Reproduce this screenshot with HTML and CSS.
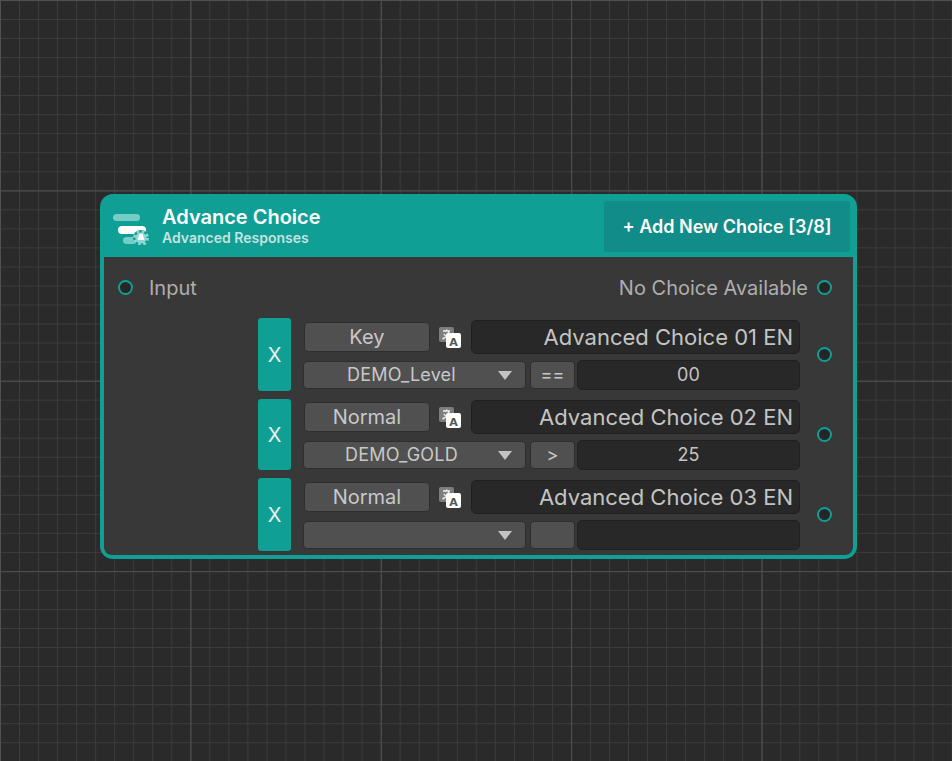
FILE: index.html
```html
<!DOCTYPE html>
<html lang="en">
<head>
    <meta charset="UTF-8">
    <title>Advance Choice</title>
    <link rel="stylesheet" href="styles.css">
</head>
<body>
    <svg class="defs" width="0" height="0">
        <symbol id="translate" viewBox="0 0 22 21">
            <rect x="0" y="0" width="15" height="15" rx="2" fill="#7d7d7d"/>
            <path d="M4 4H11M7.5 2.5V4M10 4.5C9 8 6.5 10.5 3.5 12M5 7C6 9 8 10.5 10 11" fill="none" stroke="#eee" stroke-width="1.4"/>
            <rect x="7" y="6" width="15" height="15" rx="2" fill="#fff"/>
            <text x="14.5" y="18.5" class="translate-a">A</text>
        </symbol>
    </svg>

    <div class="node">
        <div class="node-header">
            <svg class="node-icon" width="36" height="34" viewBox="0 0 36 34">
                <rect x="0" y="3" width="27" height="7" rx="3.5" fill="#74cdc6"/>
                <rect x="5" y="15" width="28" height="8" rx="4" fill="#fff"/>
                <rect x="10" y="26" width="14" height="7" rx="3.5" fill="#74cdc6"/>
                <circle cx="28" cy="27" r="8" fill="#0f9f95"/>
                <circle cx="28" cy="27" r="6.5" fill="none" stroke="#8fd8d2" stroke-width="3" stroke-dasharray="2.6 2.5"/>
                <circle cx="28" cy="27" r="5.5" fill="#8fd8d2"/>
                <path d="M28 22.5C26 22.5 25.6 24 25.6 26L24.6 29H31.4L30.4 26C30.4 24 30 22.5 28 22.5Z" fill="#fff"/>
            </svg>
            <div class="node-titles">
                <div class="node-title">Advance Choice</div>
                <div class="node-subtitle">Advanced Responses</div>
            </div>
            <div class="add-choice">+ Add New Choice [3/8]</div>
        </div>
        <div class="node-body">
            <div class="port-row">
                <span class="port"></span>
                <span class="port-label port-input">Input</span>
                <span class="port-label port-output">No Choice Available</span>
                <span class="port"></span>
            </div>

            <div class="choices">
                <div class="choice">
                    <div class="remove">X</div>
                    <div class="choice-fields">
                        <div class="top-line">
                            <div class="btn type-btn">Key</div>
                            <svg class="translate-icon" width="22" height="21"><use href="#translate"/></svg>
                            <div class="field text-field">Advanced Choice 01 EN</div>
                        </div>
                        <div class="bottom-line">
                            <div class="btn dropdown"><span class="dropdown-text">DEMO_Level</span><span class="arrow"></span></div>
                            <div class="btn op">==</div>
                            <div class="field value">00</div>
                        </div>
                    </div>
                    <span class="port choice-port"></span>
                </div>

                <div class="choice choice-short">
                    <div class="remove">X</div>
                    <div class="choice-fields">
                        <div class="top-line">
                            <div class="btn type-btn">Normal</div>
                            <svg class="translate-icon" width="22" height="21"><use href="#translate"/></svg>
                            <div class="field text-field">Advanced Choice 02 EN</div>
                        </div>
                        <div class="bottom-line">
                            <div class="btn dropdown"><span class="dropdown-text">DEMO_GOLD</span><span class="arrow"></span></div>
                            <div class="btn op">&gt;</div>
                            <div class="field value">25</div>
                        </div>
                    </div>
                    <span class="port choice-port"></span>
                </div>

                <div class="choice">
                    <div class="remove">X</div>
                    <div class="choice-fields">
                        <div class="top-line">
                            <div class="btn type-btn">Normal</div>
                            <svg class="translate-icon" width="22" height="21"><use href="#translate"/></svg>
                            <div class="field text-field">Advanced Choice 03 EN</div>
                        </div>
                        <div class="bottom-line">
                            <div class="btn dropdown"><span class="dropdown-text"></span><span class="arrow"></span></div>
                            <div class="btn op"></div>
                            <div class="field value"></div>
                        </div>
                    </div>
                    <span class="port choice-port"></span>
                </div>
            </div>
        </div>
    </div>
</body>
</html>
```

FILE: styles.css
```css
* {
    box-sizing: border-box;
}
html, body {
    height: 100%;
}
body {
    margin: 0;
    overflow: hidden;
    font-family: Inter, "Noto Sans", sans-serif;
    background-color: #2a2a2a;
    background-image:
        linear-gradient(to right, #505050 1px, transparent 1px),
        linear-gradient(to bottom, #505050 1px, transparent 1px),
        linear-gradient(to right, #3c3c3c 1px, transparent 1px),
        linear-gradient(to bottom, #3c3c3c 1px, transparent 1px);
    background-size: 190.4px 190.4px, 190.4px 190.4px, 19.04px 19.04px, 19.04px 19.04px;
    background-position: 0 0;
}
.defs {
    position: absolute;
}
.translate-a {
    font-family: "DejaVu Sans", sans-serif;
    font-size: 11px;
    font-weight: 700;
    fill: #555;
    text-anchor: middle;
}

/* node */
.node {
    position: absolute;
    left: 100px;
    top: 194px;
    width: 757px;
    height: 365px;
    display: flex;
    flex-direction: column;
    background: #0f9f95;
    border-radius: 13px;
    padding: 0 4px 4px;
}
.node-header {
    height: 63px;
    display: flex;
    align-items: center;
    padding-left: 9px;
}
.node-icon {
    flex: none;
    margin-top: 4px;
}
.node-titles {
    margin-left: 13px;
    flex: 1;
}
.node-title {
    font-size: 20px;
    font-weight: 600;
    line-height: 24px;
    color: #fff;
}
.node-subtitle {
    font-size: 14px;
    font-weight: 600;
    line-height: 18px;
    color: #c6e3e0;
}
.add-choice {
    width: 246px;
    height: 51px;
    margin: 2px 3px 0 0;
    display: flex;
    align-items: center;
    justify-content: center;
    background: #128c88;
    border-radius: 3px;
    color: #fff;
    font-size: 18px;
    font-weight: 600;
}
.node-body {
    flex: 1;
    background: #383838;
    border-radius: 0 0 8px 8px;
    padding: 0 21px 4px 14px;
    display: flex;
    flex-direction: column;
}

/* ports */
.port {
    flex: none;
    width: 15px;
    height: 15px;
    border-radius: 50%;
    background: #262626;
    border: 2px solid #0f9f95;
}
.port-row {
    height: 61px;
    display: flex;
    align-items: center;
    font-size: 20px;
    color: #aeaeae;
}
.port-input {
    margin-left: 16px;
    flex: 1;
}
.port-output {
    margin-right: 9px;
}

/* choices */
.choices {
    display: flex;
    flex-direction: column;
    gap: 8px;
    padding-left: 140px;
}
.choice {
    height: 73px;
    display: flex;
    align-items: center;
}
.choice-short {
    height: 71px;
}
.remove {
    width: 33px;
    height: 100%;
    display: flex;
    align-items: center;
    justify-content: center;
    background: #0f9f95;
    border-radius: 3px;
    color: #f2f2f2;
    font-size: 20px;
}
.choice-fields {
    width: 498px;
    margin-left: 12px;
    display: flex;
    flex-direction: column;
    gap: 6px;
}
.top-line, .bottom-line {
    display: flex;
    align-items: center;
}
.bottom-line {
    height: 30px;
}
.btn {
    display: flex;
    align-items: center;
    justify-content: center;
    background: #505050;
    border: 1px solid #2e2e2e;
    border-radius: 4px;
    color: #c8c8c8;
    height: 28px;
}
.type-btn {
    width: 126px;
    height: 30px;
    margin-left: 1px;
    font-size: 20px;
}
.translate-icon {
    flex: none;
    margin: 0 10px 0 9px;
    margin-top: 2px;
}
.field {
    background: #282828;
    border: 1px solid #202020;
    border-radius: 5px;
    color: #c4c4c4;
    display: flex;
    align-items: center;
}
.text-field {
    flex: 1;
    height: 34px;
    justify-content: flex-end;
    padding-right: 6px;
    font-size: 22px;
}
.dropdown {
    width: 223px;
    font-size: 18px;
    padding-right: 26px;
    position: relative;
}
.dropdown-text {
    letter-spacing: 0.2px;
}
.arrow {
    position: absolute;
    right: 13px;
    top: 9px;
    width: 0;
    height: 0;
    border-left: 7px solid transparent;
    border-right: 7px solid transparent;
    border-top: 9px solid #c4c4c4;
}
.op {
    width: 45px;
    margin-left: 4px;
    font-size: 18px;
}
.value {
    flex: 1;
    height: 30px;
    margin-left: 2px;
    justify-content: center;
    font-size: 18px;
}
.choice-port {
    margin-left: 17px;
}
```
